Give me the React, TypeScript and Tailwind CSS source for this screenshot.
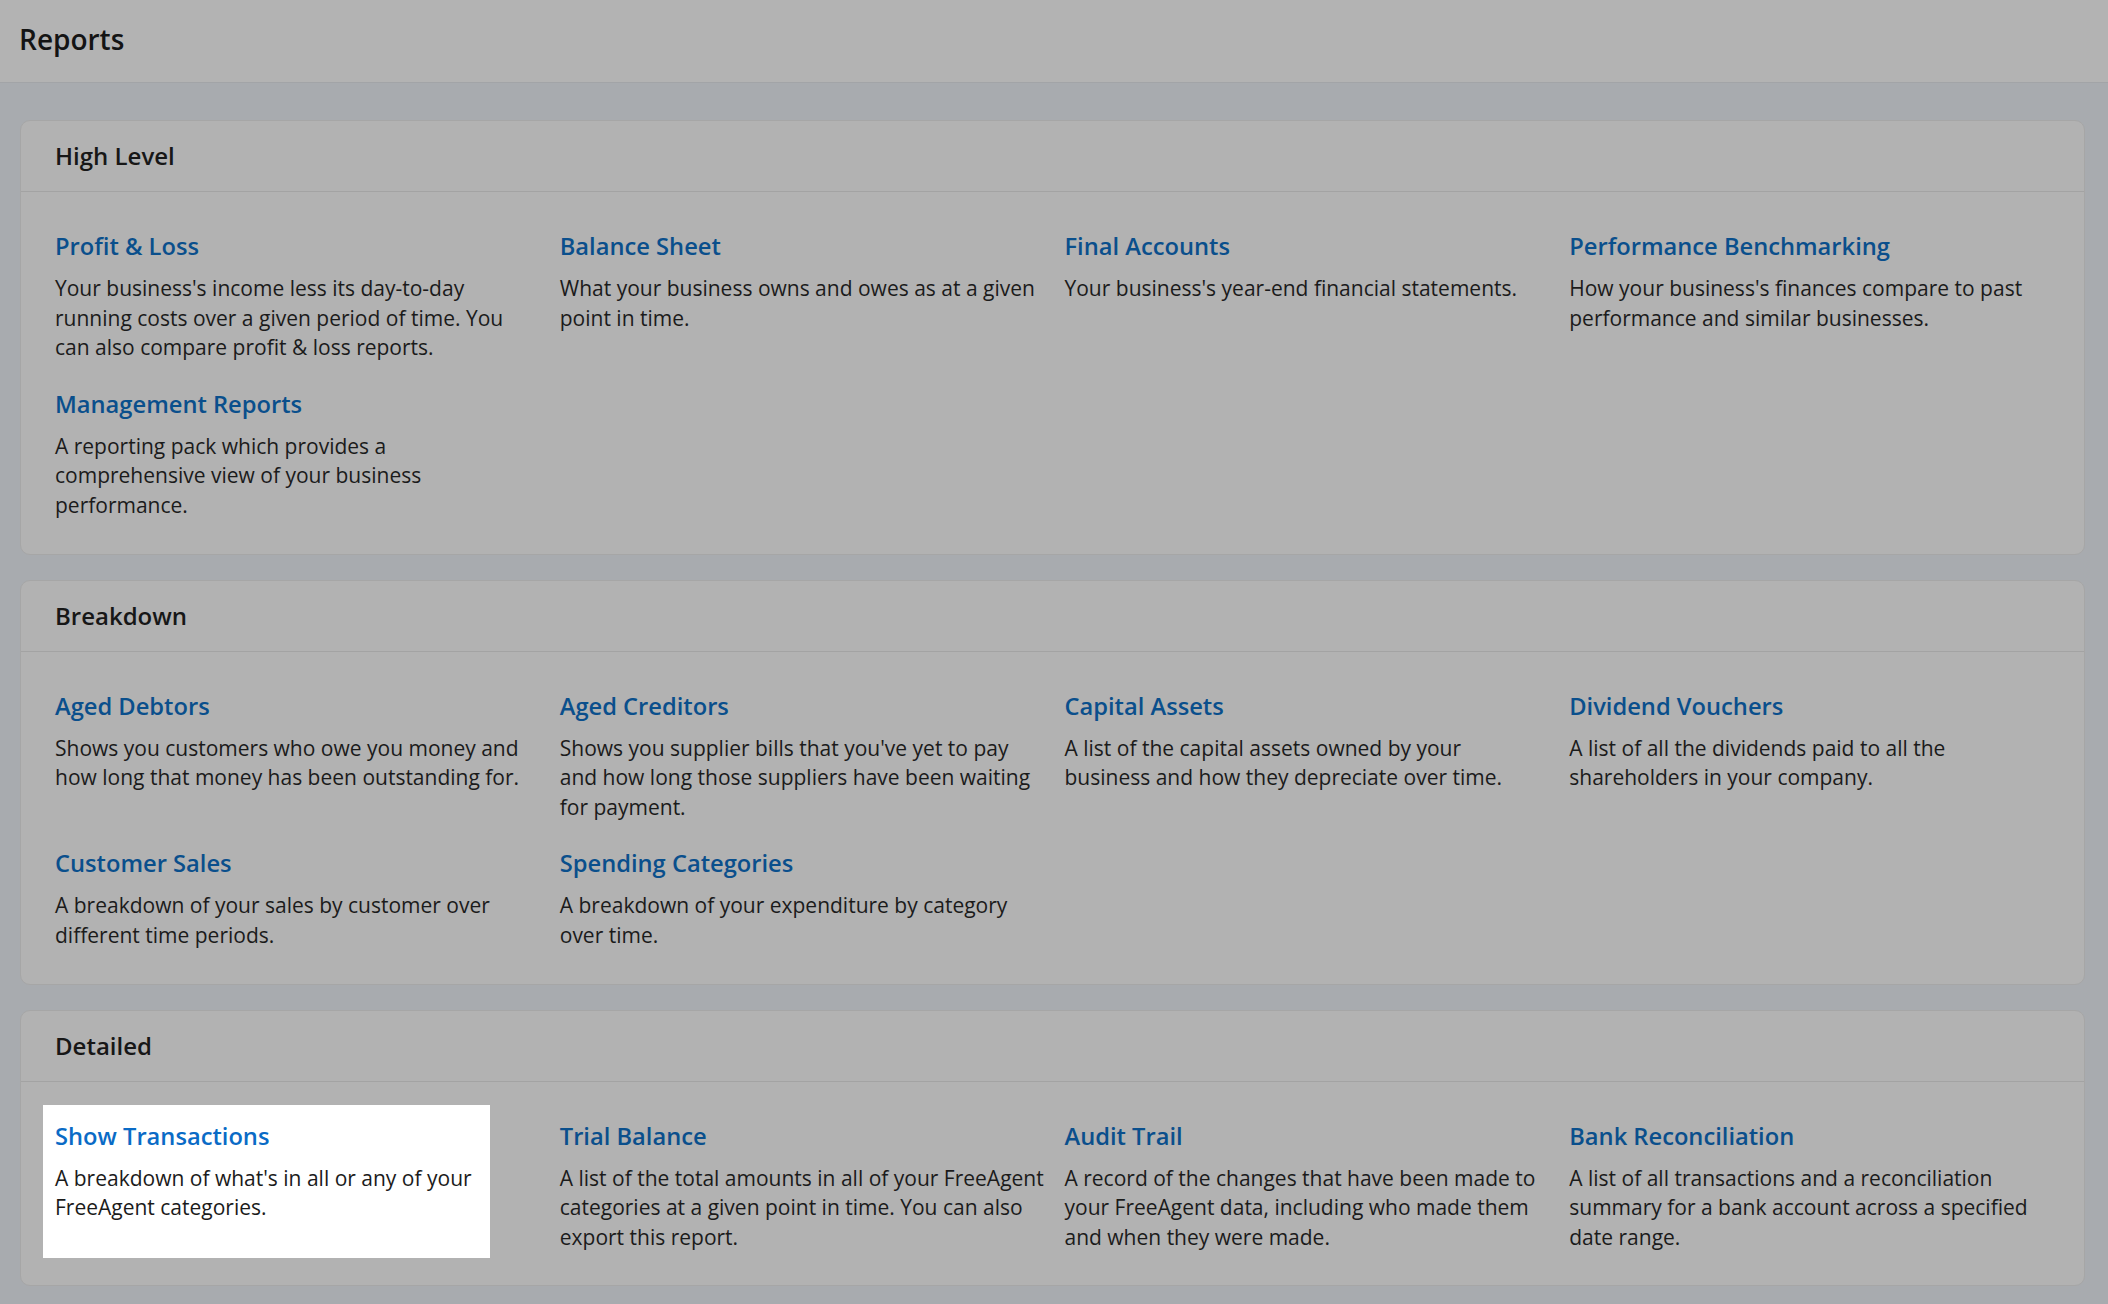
// descriptions are split into the lines shown in the design
const sections = [
  {
    title: "High Level",
    items: [
      {
        name: "Profit & Loss",
        lines: [
          "Your business's income less its day-to-day",
          "running costs over a given period of time. You",
          "can also compare profit & loss reports.",
        ],
      },
      {
        name: "Balance Sheet",
        lines: ["What your business owns and owes as at a given", "point in time."],
      },
      {
        name: "Final Accounts",
        lines: ["Your business's year-end financial statements."],
      },
      {
        name: "Performance Benchmarking",
        lines: ["How your business's finances compare to past", "performance and similar businesses."],
      },
      {
        name: "Management Reports",
        lines: ["A reporting pack which provides a", "comprehensive view of your business", "performance."],
      },
    ],
  },
  {
    title: "Breakdown",
    items: [
      {
        name: "Aged Debtors",
        lines: ["Shows you customers who owe you money and", "how long that money has been outstanding for."],
      },
      {
        name: "Aged Creditors",
        lines: [
          "Shows you supplier bills that you've yet to pay",
          "and how long those suppliers have been waiting",
          "for payment.",
        ],
      },
      {
        name: "Capital Assets",
        lines: ["A list of the capital assets owned by your", "business and how they depreciate over time."],
      },
      {
        name: "Dividend Vouchers",
        lines: ["A list of all the dividends paid to all the", "shareholders in your company."],
      },
      {
        name: "Customer Sales",
        lines: ["A breakdown of your sales by customer over", "different time periods."],
      },
      {
        name: "Spending Categories",
        lines: ["A breakdown of your expenditure by category", "over time."],
      },
    ],
  },
  {
    title: "Detailed",
    items: [
      {
        name: "Show Transactions",
        lines: ["A breakdown of what's in all or any of your", "FreeAgent categories."],
        highlight: true,
      },
      {
        name: "Trial Balance",
        lines: [
          "A list of the total amounts in all of your FreeAgent",
          "categories at a given point in time. You can also",
          "export this report.",
        ],
      },
      {
        name: "Audit Trail",
        lines: [
          "A record of the changes that have been made to",
          "your FreeAgent data, including who made them",
          "and when they were made.",
        ],
      },
      {
        name: "Bank Reconciliation",
        lines: [
          "A list of all transactions and a reconciliation",
          "summary for a bank account across a specified",
          "date range.",
        ],
      },
    ],
  },
];

type Item = { name: string; lines: string[]; highlight?: boolean };

function ReportItem({ item }: { item: Item }) {
  return (
    <div
      className={
        item.highlight
          ? "w-[447px] bg-white pl-3 pt-[15px] pb-[6px]"
          : "pl-3 pt-[15px] pb-[6px]"
      }
    >
      <a
        href="#"
        className={
          item.highlight
            ? "block text-[23.7px] leading-8 font-semibold text-[#0a6bc6]"
            : "block text-[23.7px] leading-8 font-semibold text-[#0a4f8c]"
        }
      >
        {item.name}
      </a>
      <p className="mt-3 text-[21px] leading-[29.6px] text-[#1b1b1b] whitespace-nowrap">
        {item.lines.map((line) => (
          <span key={line} className="block">
            {line}
          </span>
        ))}
      </p>
    </div>
  );
}

export default function App() {
  return (
    <div
      className="min-h-[1304px] bg-[#a8abaf] pb-4"
      style={{ fontFamily: "'Open Sans', 'Noto Sans', sans-serif" }}
    >
      <header className="h-[83px] flex items-center bg-[#b3b3b3] border-b border-[#a2a4a7] px-[19px]">
        <h1 className="text-[28px] font-semibold text-[#141414] -mt-1">Reports</h1>
      </header>

      <main className="pt-[37px] pl-5 pr-[23px] space-y-[25px]">
        {sections.map((section) => (
          <section
            key={section.title}
            className="bg-[#b2b2b2] rounded-[10px] border border-[#a6a6a6]"
          >
            <div className="h-[71px] flex items-center px-[34px] border-b border-[#a3a3a3]">
              <h2 className="text-[24px] font-semibold text-[#171717]">{section.title}</h2>
            </div>
            <div className="grid grid-cols-4 gap-y-1 px-[22px] pt-[23px] pb-[27px]">
              {section.items.map((item) => (
                <ReportItem key={item.name} item={item} />
              ))}
            </div>
          </section>
        ))}
      </main>
    </div>
  );
}
